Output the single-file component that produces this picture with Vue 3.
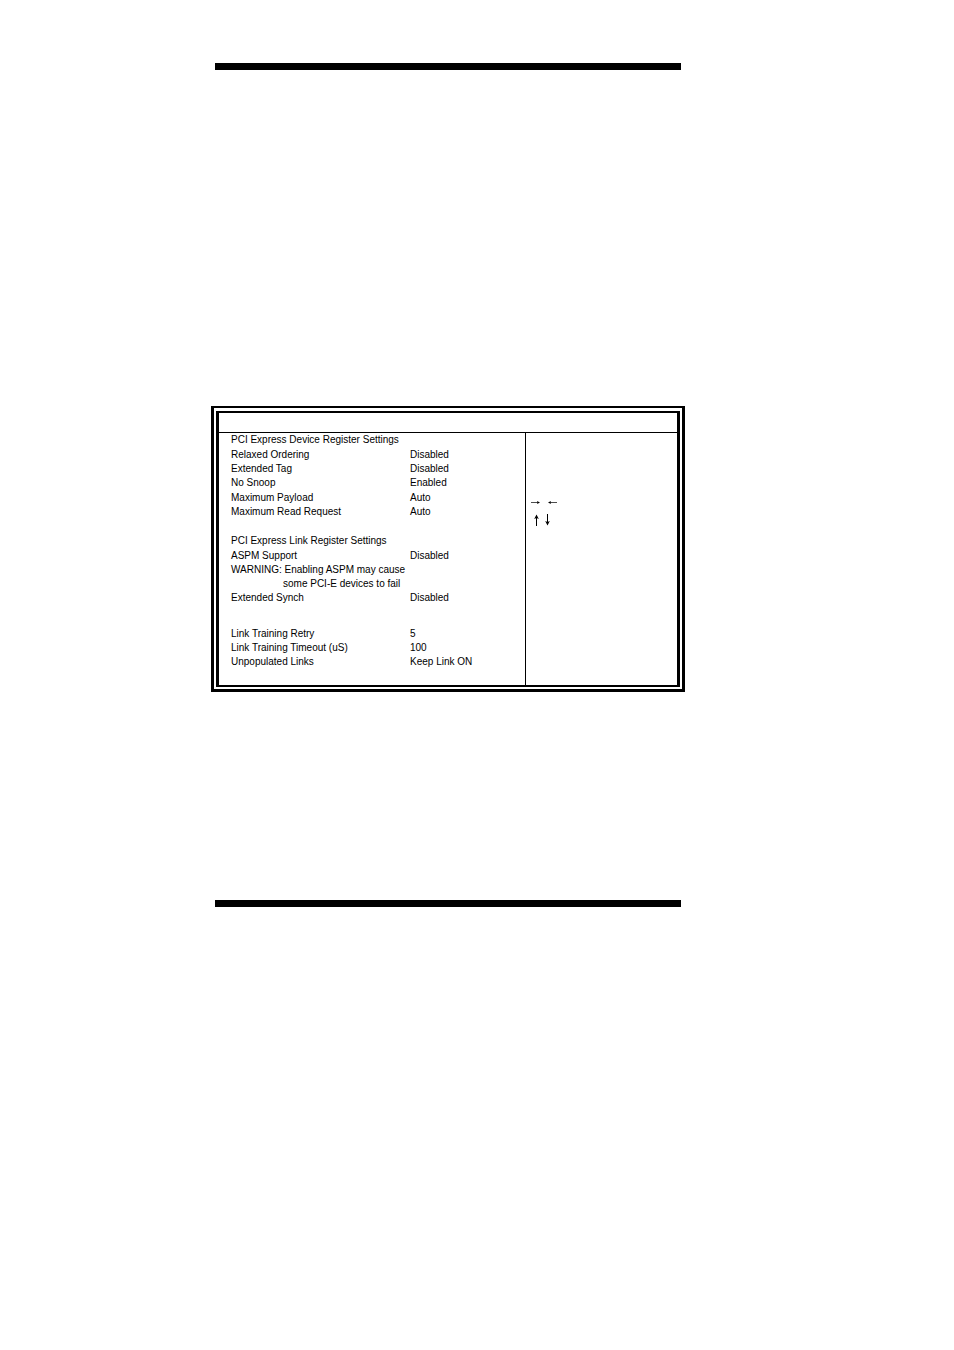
<template>
  <div class="page">
    <hr class="rule" />
    <main class="content">
      <div class="frame">
        <section class="screen">
          <header class="title-bar"></header>
          <div class="screen-body">
            <div class="settings">
              <table v-for="(group, g) in groups" :key="g" class="group">
                <colgroup>
                  <col class="label-col" />
                  <col />
                </colgroup>
                <thead v-if="group.title">
                  <tr>
                    <th class="group-title" colspan="2">{{ group.title }}</th>
                  </tr>
                </thead>
                <tbody>
                  <tr v-for="row in group.rows" :key="row.label">
                    <td v-if="row.note" colspan="2">
                      {{ row.label }}
                      <span class="note">{{ row.note }}</span>
                    </td>
                    <template v-else>
                      <td>{{ row.label }}</td>
                      <td>{{ row.value }}</td>
                    </template>
                  </tr>
                </tbody>
              </table>
            </div>
            <aside class="help">
              <div class="keys">
                <svg width="9" height="7" viewBox="0 0 9 7">
                  <path d="M0 3.5H8" class="thin" />
                  <path d="M9 3.5L6 2L6.5 3.5L6 5Z" />
                </svg>
                <svg width="9" height="7" viewBox="0 0 9 7">
                  <path d="M1 3.5H9" class="thin" />
                  <path d="M0 3.5L3 2L2.5 3.5L3 5Z" />
                </svg>
              </div>
              <div class="keys keys-vertical">
                <svg width="5" height="12" viewBox="0 0 5 12">
                  <path d="M2.5 2V12" class="stem" />
                  <path d="M2.5 0.5L4.8 5L2.5 4L0.2 5Z" />
                </svg>
                <svg width="5" height="12" viewBox="0 0 5 12">
                  <path d="M2.5 0V10" class="stem" />
                  <path d="M2.5 11.5L4.8 7L2.5 8L0.2 7Z" />
                </svg>
              </div>
            </aside>
          </div>
        </section>
      </div>
    </main>
    <hr class="rule" />
  </div>
</template>

<script setup>
const groups = [
  {
    title: "PCI Express Device Register Settings",
    rows: [
      { label: "Relaxed Ordering", value: "Disabled" },
      { label: "Extended Tag", value: "Disabled" },
      { label: "No Snoop", value: "Enabled" },
      { label: "Maximum Payload", value: "Auto" },
      { label: "Maximum Read Request", value: "Auto" },
    ],
  },
  {
    title: "PCI Express Link Register Settings",
    rows: [
      { label: "ASPM Support", value: "Disabled" },
      {
        label: "WARNING: Enabling ASPM may cause",
        note: "some PCI-E devices to fail",
      },
      { label: "Extended Synch", value: "Disabled" },
    ],
  },
  {
    rows: [
      { label: "Link Training Retry", value: "5" },
      { label: "Link Training Timeout (uS)", value: "100" },
      { label: "Unpopulated Links", value: "Keep Link ON" },
    ],
  },
];
</script>

<style>
body {
  margin: 0;
  background: #fff;
}
</style>

<style scoped>
.page {
  box-sizing: border-box;
  min-height: 100vh;
  padding: 63px 273px 64px 215px;
  background: #fff;
  color: #000;
  font-family: "Liberation Sans", Arial, sans-serif;
  font-size: 10px;
  line-height: 14px;
}

.rule {
  height: 7px;
  margin: 0;
  border: none;
  background: #000;
}

.content {
  padding: 336px 0 208px;
}

/* double border around the setup screen */
.frame {
  margin: 0 -4px;
  padding: 3px 2px 2px;
  border: 3px solid #000;
  border-top-width: 2px;
}

.screen {
  border: solid #000;
  border-width: 2px 3px;
}

.title-bar {
  height: 19px;
  border-bottom: 1px solid #000;
}

.screen-body {
  display: flex;
}

.settings {
  flex: 1;
  padding: 0 0 15px 12px;
}

.group {
  border-collapse: collapse;
  table-layout: fixed;
  width: 100%;
}

.group + .group {
  margin-top: 15px;
}

.group:last-child {
  margin-top: 21px;
}

.label-col {
  width: 179px;
}

th,
td {
  padding: 0;
  text-align: left;
  vertical-align: top;
  font-weight: normal;
}

.group-title,
tr:nth-child(3n) td {
  padding-bottom: 1px;
}

.note {
  display: block;
  padding-left: 52px;
}

.help {
  box-sizing: border-box;
  width: 152px;
  padding: 66px 5px 0;
  border-left: 1px solid #000;
}

.keys {
  display: flex;
  gap: 8px;
}

.keys-vertical {
  gap: 6px;
  margin-top: 8px;
  padding-left: 3px;
}

.thin {
  stroke: #000;
  stroke-width: 0.7;
}

.stem {
  stroke: #000;
  stroke-width: 1;
}
</style>
